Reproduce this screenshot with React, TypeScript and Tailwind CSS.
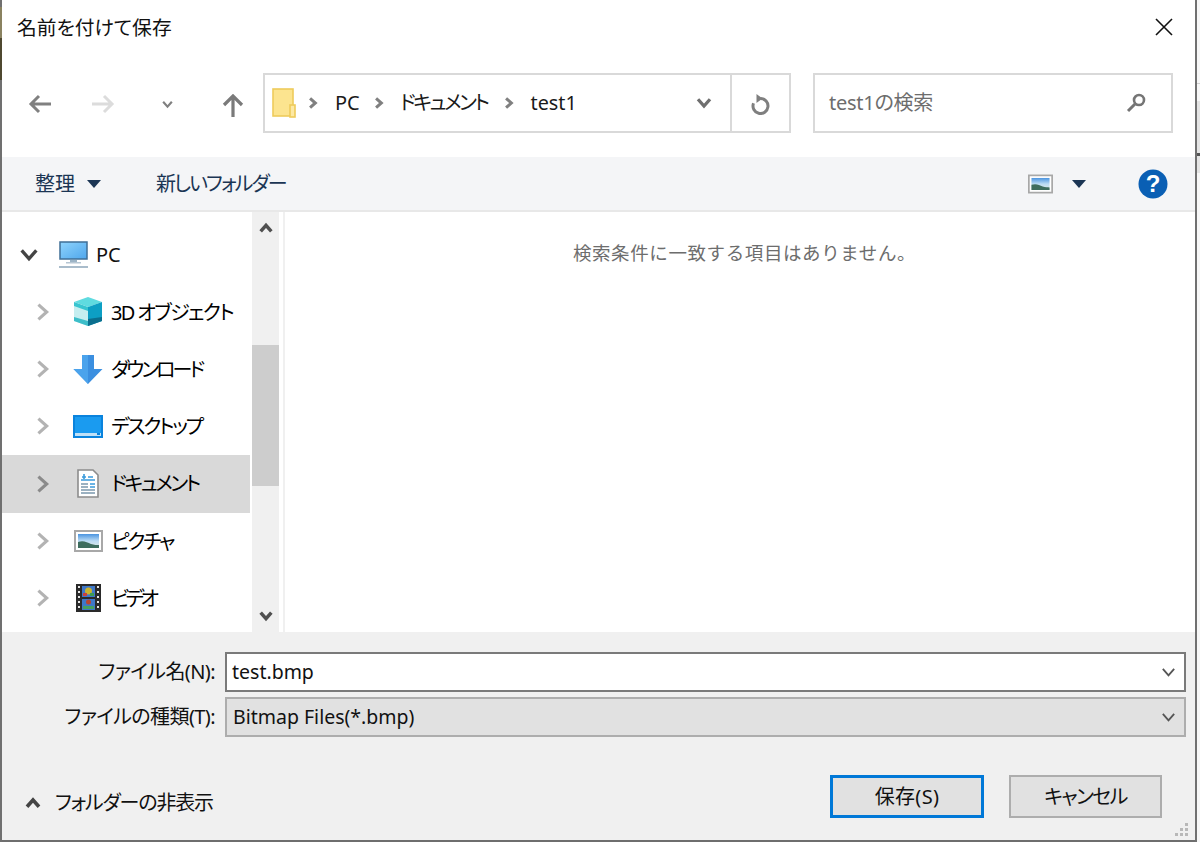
import type { ReactNode } from "react";

function Chevron({ dir, color, size = 12, width = 2.4 }: { dir: "up" | "down" | "left" | "right"; color: string; size?: number; width?: number }) {
  const d = {
    up: "M2 8.5 6 4l4 4.5",
    down: "M2 3.5 6 8l4-4.5",
    right: "M3.5 2 8 6l-4.5 4",
    left: "M8.5 2 4 6l4.5 4",
  }[dir];
  return (
    <svg width={size} height={size} viewBox="0 0 12 12" className="shrink-0">
      <path d={d} fill="none" stroke={color} strokeWidth={width} />
    </svg>
  );
}

function Caret({ className }: { className?: string }) {
  return (
    <svg width="14" height="8" viewBox="0 0 14 8" className={className}>
      <path d="M0 0h14L7 8z" fill="#1b3554" />
    </svg>
  );
}

function FolderIcon() {
  return (
    <svg width="24" height="30" viewBox="0 0 24 30" className="shrink-0">
      <rect x="1" y="1" width="20" height="27" fill="#fce48f" stroke="#eecb5b" strokeWidth="1.6" />
      <rect x="18" y="17" width="5" height="12" fill="#fde9a4" stroke="#eecb5b" strokeWidth="1.6" />
    </svg>
  );
}

function PcIcon() {
  return (
    <svg width="30" height="28" viewBox="0 0 30 28" className="shrink-0">
      <defs>
        <linearGradient id="screen" x1="0" y1="0" x2="1" y2="1">
          <stop offset="0" stopColor="#8fd4fd" />
          <stop offset="1" stopColor="#4ea6ec" />
        </linearGradient>
      </defs>
      <rect x="1" y="1" width="27" height="17" fill="url(#screen)" stroke="#3f6f97" strokeWidth="1.5" />
      <rect x="11" y="19" width="7" height="2" fill="#9db4c6" />
      <rect x="7" y="21" width="15" height="1.5" fill="#b6c6d3" />
      <rect x="0" y="25" width="29" height="2" fill="#a9bccb" />
    </svg>
  );
}

function CubeIcon() {
  return (
    <svg width="30" height="30" viewBox="0 0 30 30" className="shrink-0">
      <path d="M15 0 29 5 15 10 1 5z" fill="#5fdbe0" />
      <path d="M1 5 15 10v19L1 24z" fill="#c5eef0" />
      <path d="M1 5 15 10v4L1 9z" fill="#38c5d0" />
      <path d="M1 20 15 24v5L1 24z" fill="#3dbec9" />
      <path d="M29 5 15 10v19l14-5z" fill="#0d9fc4" />
      <path d="M15 22l14-2v4l-14 5z" fill="#0b6f8e" />
    </svg>
  );
}

function DownloadIcon() {
  return (
    <svg width="30" height="29" viewBox="0 0 30 29" className="shrink-0">
      <path d="M9 0h12v14h8.5L15 29 .5 14H9z" fill="#3b8fe0" />
      <path d="M9 0h6v29L.5 14H9z" fill="#4ba3ec" />
    </svg>
  );
}

function DesktopIcon() {
  return (
    <svg width="30" height="23" viewBox="0 0 30 23" className="shrink-0">
      <rect x="1" y="1" width="28" height="21" fill="#fff" stroke="#0a83dd" strokeWidth="2" />
      <rect x="2" y="2" width="26" height="16" fill="#1a9bf0" />
      <rect x="2" y="18" width="26" height="3" fill="#bfe0f7" />
      <rect x="24" y="18" width="3" height="2" fill="#0a83dd" />
    </svg>
  );
}

function DocIcon() {
  return (
    <svg width="22" height="29" viewBox="0 0 22 29" className="shrink-0">
      <path d="M1 1h15l5 5v22H1z" fill="#fff" stroke="#8c8c8c" strokeWidth="1.6" />
      <path d="M5 8h4M11 8h5M7 5v5M4 11h14" stroke="#3a9bdc" strokeWidth="1.6" fill="none" />
      <path d="M4 15h7M4 18h7M4 21h14M4 24h14" stroke="#7b98ad" strokeWidth="1.4" fill="none" />
      <path d="M13 15h5M13 18h5" stroke="#3a9bdc" strokeWidth="1.6" fill="none" />
    </svg>
  );
}

function PictureIcon({ w = 29, h = 22 }: { w?: number; h?: number }) {
  return (
    <svg width={w} height={h} viewBox="0 0 29 22" className="shrink-0">
      <defs>
        <linearGradient id="sky" x1="0" y1="0" x2="0" y2="1">
          <stop offset="0" stopColor="#4a94e0" />
          <stop offset="0.5" stopColor="#bcdcf4" />
          <stop offset="1" stopColor="#dfe9e4" />
        </linearGradient>
      </defs>
      <rect x="1" y="1" width="27" height="20" fill="#fff" stroke="#a8a8a8" strokeWidth="2" />
      <rect x="4" y="4" width="21" height="14" fill="url(#sky)" />
      <path d="M4 12c5-2 9 0 13 2 3 1 6 1 8 1v3H4z" fill="#3e6d5e" />
    </svg>
  );
}

function FilmIcon() {
  return (
    <svg width="25" height="28" viewBox="0 0 25 28" className="shrink-0">
      <rect x="0" y="0" width="25" height="28" fill="#2a2a2a" />
      <path d="M2 2h2v2H2zM2 7h2v2H2zM2 12h2v2H2zM2 17h2v2H2zM2 22h2v2H2zM21 2h2v2h-2zM21 7h2v2h-2zM21 12h2v2h-2zM21 17h2v2h-2zM21 22h2v2h-2z" fill="#e6e6e6" />
      <rect x="6" y="2" width="13" height="11" fill="#3f78c9" />
      <rect x="6" y="15" width="13" height="11" fill="#3f78c9" />
      <circle cx="12.5" cy="7" r="3.5" fill="#c9b32e" />
      <rect x="7" y="9" width="4" height="3" fill="#c9423f" />
      <rect x="14" y="9" width="4" height="3" fill="#3d9c54" />
      <circle cx="12.5" cy="18" r="2.5" fill="#b9452f" />
      <rect x="7" y="22" width="11" height="3" fill="#47a05f" />
    </svg>
  );
}

function TreeRow({ icon, label, tracking, selected }: { icon: ReactNode; label: string; tracking: string; selected?: boolean }) {
  return (
    <div className={selected ? "flex h-[58px] items-center bg-[#d9d9d9] pl-[30px] pb-[1px]" : "flex h-[57px] items-center pl-[30px] pb-[1px]"}>
      <Chevron dir="right" color={selected ? "#8a8a8a" : "#b3b3b3"} size={22} width={1.7} />
      <div className="ml-[18px] mr-[7px] flex w-[32px] justify-center">{icon}</div>
      <span className={`mt-[1px] whitespace-nowrap text-[20px] text-black ${tracking}`}>{label}</span>
    </div>
  );
}

function AddressChevron({ className }: { className: string }) {
  return (
    <div className={className}>
      <Chevron dir="right" color="#808080" size={14} width={2.6} />
    </div>
  );
}

export default function App() {
  return (
    <div className="flex h-[842px] w-[1200px] overflow-hidden bg-white font-['Noto_Sans','Noto_Sans_CJK_JP',sans-serif] leading-none [font-feature-settings:'palt']">
      {/* bit of the desktop showing left of the window */}
      <div className="flex w-[2px] flex-col bg-[#707070]">
        <div className="mt-[7px] h-[31px] bg-[#8a8260]" />
        <div className="h-[42px] bg-[#4f4830]" />
      </div>

      <div className="flex min-w-0 flex-1 flex-col">
        {/* title bar */}
        <div className="flex h-[55px] items-center justify-between pl-[15px] pr-[22px]">
          <span className="text-[19.8px] text-[#111]">名前を付けて保存</span>
          <svg width="18" height="18" viewBox="0 0 18 18" className="mb-[1px]">
            <path d="M1 1l16 16M17 1 1 17" stroke="#111" strokeWidth="1.6" fill="none" />
          </svg>
        </div>

        {/* navigation row */}
        <div className="flex h-[102px] pt-[18px]">
          <div className="flex h-[60px] w-[261px] items-center pl-[26px] pt-[2px]">
            <svg width="24" height="20" viewBox="0 0 24 20">
              <path d="M23 10H3M11 2l-8 8 8 8" stroke="#808080" strokeWidth="3" fill="none" />
            </svg>
            <svg width="24" height="20" viewBox="0 0 24 20" className="ml-[39px]">
              <path d="M1 10h20M13 2l8 8-8 8" stroke="#dcdcdc" strokeWidth="3" fill="none" />
            </svg>
            <div className="ml-[46px]">
              <Chevron dir="down" color="#808080" size={13} width={2} />
            </div>
            <svg width="22" height="24" viewBox="0 0 22 24" className="ml-[48px] mt-[4px]">
              <path d="M11 23V3M2 11l9-9 9 9" stroke="#7a7a7a" strokeWidth="3.2" fill="none" />
            </svg>
          </div>

          <div className="flex h-[60px] w-[528px] items-center border-2 border-[#d9d9d9] pl-[7px]">
            <FolderIcon />
            <AddressChevron className="ml-[10px]" />
            <span className="ml-[15px] text-[20px] text-[#1a1a1a]">PC</span>
            <AddressChevron className="ml-[12px]" />
            <span className="ml-[14px] text-[20px] tracking-[-2.4px] text-[#1a1a1a]">ドキュメント</span>
            <AddressChevron className="ml-[15px]" />
            <span className="ml-[14px] text-[19.8px] text-[#1a1a1a]">test1</span>
            <div className="ml-auto flex h-full items-center">
              <Chevron dir="down" color="#6f6f6f" size={18} width={2.2} />
              <div className="ml-[17px] h-full w-[2px] bg-[#d9d9d9]" />
              <div className="flex w-[57px] items-center justify-center pt-[2px]">
                <svg width="19" height="21" viewBox="0 0 19 21">
                  <path d="M9.5 4.5a7.5 7.5 0 1 1-7 4.8" stroke="#7f7f7f" strokeWidth="3" fill="none" />
                  <path d="M5.5 0l6 4.5-6 4.5z" fill="#7f7f7f" />
                </svg>
              </div>
            </div>
          </div>

          <div className="ml-[22px] flex h-[60px] w-[360px] items-center justify-between border-2 border-[#d9d9d9] pl-[14px] pr-[25px]">
            <span className="text-[20px] tracking-[-0.25px] text-[#6d6d6d]">test1の検索</span>
            <svg width="20" height="20" viewBox="0 0 20 20">
              <circle cx="13" cy="7" r="5" stroke="#757575" strokeWidth="2.6" fill="none" />
              <path d="M9 11l-7 7" stroke="#757575" strokeWidth="3" fill="none" />
            </svg>
          </div>
        </div>

        {/* toolbar */}
        <div className="flex h-[55px] shrink-0 items-center border-b-2 border-[#e8e8e8] bg-[#f4f5f7] pl-[33px] pr-[27px]">
          <span className="text-[20px] text-[#1b3554]">整理</span>
          <Caret className="ml-[12px]" />
          <span className="ml-[55px] text-[20px] tracking-[-1.9px] text-[#1b3554]">新しいフォルダー</span>
          <div className="ml-auto flex items-center">
            <PictureIcon w={25} h={20} />
            <Caret className="ml-[19px]" />
            <svg width="30" height="30" viewBox="0 0 30 30" className="ml-[52px]">
              <circle cx="15" cy="15" r="14.5" fill="#0a5fb4" />
              <text x="15" y="23" textAnchor="middle" fontSize="24" fontWeight="700" fill="#fff" fontFamily="Liberation Sans">?</text>
            </svg>
          </div>
        </div>

        {/* tree + result list */}
        <div className="flex h-[420px] shrink-0">
          <div className="flex w-[248px] shrink-0 flex-col pt-[15px]">
            <div className="flex h-[57px] items-center pb-[2px] pl-[16px]">
              <Chevron dir="down" color="#444" size={22} width={1.8} />
              <div className="ml-[19px]"><PcIcon /></div>
              <span className="ml-[7px] text-[20px] text-[#111]">PC</span>
            </div>
            <TreeRow icon={<CubeIcon />} label="3D オブジェクト" tracking="tracking-[-1.6px]" />
            <TreeRow icon={<DownloadIcon />} label="ダウンロード" tracking="tracking-[-3px]" />
            <TreeRow icon={<DesktopIcon />} label="デスクトップ" tracking="tracking-[-2.2px]" />
            <TreeRow icon={<DocIcon />} label="ドキュメント" tracking="tracking-[-2.4px]" selected />
            <TreeRow icon={<PictureIcon />} label="ピクチャ" tracking="tracking-[-2.2px]" />
            <TreeRow icon={<FilmIcon />} label="ビデオ" tracking="tracking-[-3.8px]" />
          </div>

          <div className="ml-[2px] flex w-[27px] shrink-0 flex-col items-center bg-[#f0f0f0]">
            <div className="flex h-[30px] items-center pt-[2px]">
              <Chevron dir="up" color="#505050" size={16} width={2.6} />
            </div>
            <div className="mt-[103px] h-[141px] w-full bg-[#cdcdcd]" />
            <div className="mt-auto flex h-[30px] items-center pb-[2px]">
              <Chevron dir="down" color="#505050" size={16} width={2.6} />
            </div>
          </div>

          <div className="ml-[4px] w-[2px] bg-[#f0f0f0]" />
          <div className="flex flex-1 justify-center pl-[9px] pt-[32px]">
            <span className="text-[18.5px] tracking-[0.6px] text-[#6d6d6d] [font-feature-settings:normal]">検索条件に一致する項目はありません。</span>
          </div>
        </div>

        {/* file name + buttons */}
        <div className="flex flex-1 flex-col bg-[#f0f0f0]">
          <div className="mt-[20px] flex h-[40px] items-center">
            <span className="w-[213px] text-right text-[20px] tracking-[-0.6px] text-[#111]">ファイル名(N):</span>
            <div className="ml-[10px] flex h-full w-[961px] items-center justify-between border-2 border-[#7a7a7a] bg-white pl-[5px] pr-[7px]">
              <span className="text-[19.5px] text-[#111]">test.bmp</span>
              <Chevron dir="down" color="#555" size={17} width={1.3} />
            </div>
          </div>
          <div className="mt-[5px] flex h-[40px] items-center">
            <span className="w-[213px] text-right text-[20px] tracking-[-0.6px] text-[#111]">ファイルの種類(T):</span>
            <div className="ml-[10px] flex h-full w-[961px] items-center justify-between border-2 border-[#adadad] bg-[#e1e1e1] pl-[6px] pr-[7px]">
              <span className="text-[19.5px] text-[#111]">Bitmap Files(*.bmp)</span>
              <Chevron dir="down" color="#555" size={17} width={1.3} />
            </div>
          </div>

          <div className="relative mt-[38px] flex h-[43px] items-center">
            <div className="ml-[22px] flex items-center pt-[12px]">
              <Chevron dir="up" color="#444" size={18} width={2.4} />
              <span className="ml-[13px] text-[20px] tracking-[-1.15px] text-[#111]">フォルダーの非表示</span>
            </div>
            <button className="ml-auto flex h-[43px] w-[154px] items-center justify-center border-[3px] border-[#0078d7] bg-[#e1e1e1] text-[20px] tracking-[0.3px] text-[#111]">保存(S)</button>
            <button className="ml-[25px] mr-[33px] flex h-[43px] w-[153px] items-center justify-center border-2 border-[#adadad] bg-[#e1e1e1] text-[20px] tracking-[-1.6px] text-[#111]">キャンセル</button>
            <svg width="16" height="16" viewBox="0 0 16 16" className="absolute bottom-[-20px] right-[5px]" fill="#b8b8b8">
              <path d="M11 1h3v3h-3zM11 6h3v3h-3zM6 6h3v3H6zM11 11h3v3h-3zM6 11h3v3H6zM1 11h3v3H1z" />
            </svg>
          </div>
          <div className="mt-auto h-[2px] bg-[#6e6e6e]" />
        </div>
      </div>

      <div className="w-[2px] bg-[#707070]" />
      {/* whatever sits behind the dialog on the right */}
      <div className="flex w-[3px] flex-col bg-[#f7f7f7] pt-[83px]">
        <div className="h-[1px] bg-[#d0d0d0]" />
        <div className="mt-[17px] h-[72px] bg-[#e4e4e4]" />
        <div className="mt-[-20px] h-[3px] bg-[#555]" />
      </div>
    </div>
  );
}
